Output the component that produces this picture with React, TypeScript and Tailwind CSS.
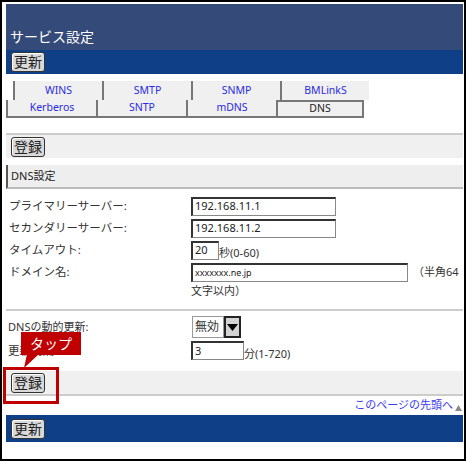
import React from "react";

const font = { fontFamily: '"Noto Sans", "Noto Sans CJK JP", sans-serif' };

function GrayButton({ label }: { label: string }) {
  return (
    <button className="h-[20px] w-[34px] rounded-[3px] border border-[#333] bg-[#d9d9d9] text-[14px] leading-none text-[#222] shadow-[inset_1px_1px_0_#fff]">
      {label}
    </button>
  );
}

function TextBox({ value, w, small }: { value: string; w: string; small?: boolean }) {
  return (
    <div
      className={`flex h-[19px] items-center border-t-2 border-l-2 border-r border-b border-t-[#333] border-l-[#333] border-r-[#888] border-b-[#888] bg-white pl-[2px] text-[#222] ${w} ${
        small ? "text-[9px]" : "text-[11px]"
      }`}
    >
      {value}
    </div>
  );
}

const tabsTop = ["WINS", "SMTP", "SNMP", "BMLinkS"];
const tabsBottom = ["Kerberos", "SNTP", "mDNS"];

export default function App() {
  return (
    <div style={font} className="relative h-[461px] w-[466px] overflow-hidden border-2 border-black bg-white pt-[2px] pl-[4px] pr-[1px]">
      {/* header */}
      <div className="flex h-[46px] items-end bg-[#344a78] pb-[3px] pl-[4px] text-[14px] text-white">サービス設定</div>
      <div className="flex h-[24px] items-center bg-[#0e3f87] pl-[5px]">
        <GrayButton label="更新" />
      </div>

      {/* tabs */}
      <div className="mt-[7px] flex pl-[7px]">
        {tabsTop.map((t) => (
          <div key={t} className="flex h-[19px] w-[89px] items-center justify-center border-l-2 border-[#777] bg-[#f0f0f0] text-[10.5px] text-[#2a2ae6]">
            {t}
          </div>
        ))}
      </div>
      <div className="flex">
        {tabsBottom.map((t) => (
          <div key={t} className="flex h-[18px] w-[90px] items-center justify-center border-b-2 border-l-2 border-[#777] bg-[#f0f0f0] text-[10.5px] text-[#2a2ae6]">
            {t}
          </div>
        ))}
        <div className="flex h-[18px] w-[88px] items-center justify-center border-2 border-[#777] bg-[#f0f0f0] text-[10.5px] text-[#222]">
          DNS
        </div>
      </div>

      {/* register bar */}
      <div className="mt-[15px] flex h-[25px] items-center border-t-2 border-[#ccc] bg-[#f0f0f0] pl-[5px]">
        <GrayButton label="登録" />
      </div>

      {/* section header */}
      <div className="mt-[7px] flex h-[24px] items-center border-b-2 border-l-2 border-b-[#bbb] border-l-[#555] bg-[#eeeeee] pl-[3px] text-[11px] text-[#222]">
        DNS設定
      </div>

      {/* form */}
      <div className="mt-[6px] flex flex-col text-[11.5px] text-[#333]">
        <div className="flex h-[22px] items-center">
          <span className="w-[185px] pl-[3px]">プライマリーサーバー:</span>
          <TextBox value="192.168.11.1" w="w-[145px]" />
        </div>
        <div className="flex h-[22px] items-center">
          <span className="w-[185px] pl-[3px]">セカンダリーサーバー:</span>
          <TextBox value="192.168.11.2" w="w-[145px]" />
        </div>
        <div className="flex h-[22px] items-center">
          <span className="w-[185px] pl-[3px]">タイムアウト:</span>
          <TextBox value="20" w="w-[28px]" />
          <span className="self-end text-[11px]">秒(0-60)</span>
        </div>
        <div className="flex h-[22px] items-center">
          <span className="w-[185px] pl-[3px]">ドメイン名:</span>
          <TextBox value="xxxxxxx.ne.jp" w="w-[217px]" small />
          <span className="ml-[5px] text-[11px]">（半角64</span>
        </div>
        <div className="pl-[185px] text-[11px] leading-[16px]">文字以内）</div>
      </div>

      <div className="mt-[10px] border-t-2 border-[#ccc]" />

      <div className="mt-[4px] flex flex-col text-[11.5px] text-[#333]">
        <div className="flex h-[24px] items-center">
          <span className="w-[186px] pl-[2px] text-[11px]">DNSの動的更新:</span>
          <div className="flex h-[22px]">
            <div className="flex w-[32px] items-center border border-[#999] bg-white pl-[2px] text-[12px]">無効</div>
            <div className="flex w-[17px] items-center justify-center border-2 border-[#222] bg-[#d4d4d4]">
              <svg width="11" height="7" viewBox="0 0 11 7">
                <path d="M0 0h11L5.5 7z" fill="#000" />
              </svg>
            </div>
          </div>
        </div>
        <div className="flex h-[23px] items-center">
          <span className="w-[185px] pl-[2px]">更新間隔:</span>
          <TextBox value="3" w="w-[53px]" />
          <span className="self-end text-[11px]">分(1-720)</span>
        </div>
      </div>

      {/* register bar 2 */}
      <div className="mt-[9px] flex h-[25px] items-center border-b-2 border-[#ccc] bg-[#f0f0f0] pl-[5px]">
        <GrayButton label="登録" />
      </div>

      <div className="flex h-[19px] items-center justify-end pr-[1px] text-[11px] text-[#3a3af0]">
        <span>このページの先頭へ</span>
        <svg width="7" height="6" viewBox="0 0 7 6" className="ml-[2px] mt-[4px]">
          <path d="M3.5 0L7 6H0z" fill="#888" />
        </svg>
      </div>

      <div className="flex h-[27px] items-center bg-[#0e3f87] pl-[5px]">
        <GrayButton label="更新" />
      </div>

      {/* callout overlay */}
      <div className="absolute top-[330px] left-[19px] flex h-[23px] w-[60px] items-center justify-center bg-[#c00000] text-[14px] text-white">
        タップ
      </div>
      <svg className="absolute top-[352px] left-[21px]" width="16" height="14" viewBox="0 0 16 14">
        <path d="M4 0h12L1 14z" fill="#c00000" />
      </svg>
      <div className="absolute top-[365px] left-[1px] h-[37px] w-[56px] border-[3px] border-[#c00000]" />
    </div>
  );
}
